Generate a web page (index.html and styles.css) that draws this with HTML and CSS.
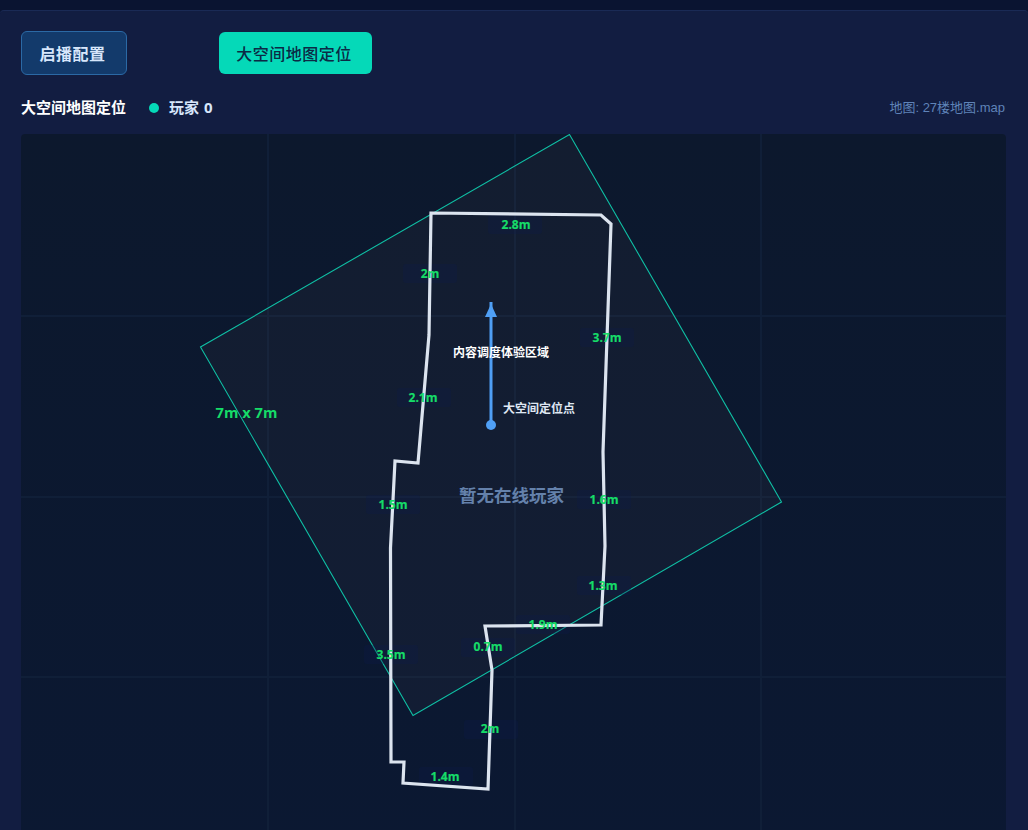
FILE: index.html
```html
<!DOCTYPE html>
<html lang="zh-CN">
<head>
<meta charset="utf-8">
<title>大空间地图定位</title>
<link rel="stylesheet" href="styles.css">
</head>
<body>
<main class="panel">
  <div class="toolbar">
    <button class="btn btn-config">启播配置</button>
    <button class="btn btn-active">大空间地图定位</button>
  </div>
  <div class="info">
    <div class="info-left">
      <span class="info-title">大空间地图定位</span>
      <span class="dot"></span>
      <span class="players">玩家 0</span>
    </div>
    <span class="map-name">地图: 27楼地图.map</span>
  </div>
  <div class="map">
    <svg class="map-svg" width="985" height="722" viewBox="21 134 985 722">
      <g class="grid">
        <path d="M268 134V856M515 134V856M761 134V856M21 316H1006M21 497H1006M21 677H1006"/>
      </g>
      <polygon class="zone" points="569.500,134.500 781.500,502 413,715.500 200.500,347"/>
      <text class="zone-label" x="246.500" y="418">7m x 7m</text>
      <g class="chips">
        <rect x="488" y="215" width="54" height="19"/>
        <rect x="403" y="264" width="54" height="19"/>
        <rect x="580" y="328" width="54" height="19"/>
        <rect x="397" y="388" width="54" height="19"/>
        <rect x="366" y="495" width="54" height="19"/>
        <rect x="577" y="490" width="54" height="19"/>
        <rect x="577" y="576" width="54" height="19"/>
        <rect x="516" y="615" width="54" height="19"/>
        <rect x="461" y="638" width="54" height="19"/>
        <rect x="364" y="645" width="54" height="19"/>
        <rect x="464" y="720" width="54" height="19"/>
        <rect x="419" y="767" width="54" height="19"/>
      </g>
      <polygon class="room" points="431,213 601,215 611,224 603,452 605,546 601,625 485,626 492,670 488,789 403,783 404,762 391,762 390.500,548 395,461 418,463 429,335"/>
      <g class="dims">
        <text x="516" y="229">2.8m</text>
        <text x="430" y="278">2m</text>
        <text x="607" y="342">3.7m</text>
        <text x="423" y="402">2.1m</text>
        <text x="393" y="509">1.5m</text>
        <text x="604" y="504">1.6m</text>
        <text x="603" y="590">1.3m</text>
        <text x="543" y="629">1.9m</text>
        <text x="488" y="651">0.7m</text>
        <text x="391" y="659">3.5m</text>
        <text x="490" y="733">2m</text>
        <text x="445" y="781">1.4m</text>
      </g>
      <path class="arrow-line" d="M491 425V302"/>
      <polygon class="arrow-head" points="491,304 497,317 485,317"/>
      <circle class="arrow-dot" cx="491" cy="425" r="5"/>
      <text class="area-label" x="501" y="357">内容调度体验区域</text>
      <text class="point-label" x="503" y="413">大空间定位点</text>
      <text class="empty" x="511.500" y="502">暂无在线玩家</text>
    </svg>
  </div>
</main>
</body>
</html>
```

FILE: styles.css
```css
* { box-sizing: border-box; }
html, body { height: 100%; }
body {
  margin: 0;
  height: 830px;
  overflow: hidden;
  background: #0a1431;
  font-family: "Open Sans", "Noto Sans CJK SC", sans-serif;
}
.panel {
  margin-top: 10px;
  height: 820px;
  padding: 20px 22px 0 21px;
  background: #121d41;
  border-top: 1px solid #1a2a55;
  border-radius: 4px 4px 0 0;
  overflow: hidden;
}
.toolbar {
  display: flex;
  align-items: center;
  gap: 92px;
  height: 44px;
}
.btn {
  font-family: inherit;
  font-size: 16px;
  letter-spacing: 0.5px;
  border-radius: 6px;
  padding: 0 3px 0 0;
}
.btn-config {
  width: 106px;
  height: 44px;
  font-weight: 700;
  color: #d7e6fb;
  background: #133a6b;
  border: 1px solid #2b69a5;
}
.btn-active {
  width: 153px;
  height: 42px;
  font-weight: 500;
  color: #0b2a45;
  background: #05d9b8;
  border: 0;
}
.info {
  display: flex;
  align-items: center;
  justify-content: space-between;
  height: 24px;
  margin-top: 19px;
  margin-bottom: 16px;
}
.info-left { display: flex; align-items: center; }
.info-title { font-size: 15px; font-weight: 700; color: #fff; }
.dot {
  width: 10px;
  height: 10px;
  margin: 3px 10px 0 23px;
  border-radius: 50%;
  background: #05d9b8;
}
.players { font-size: 15px; font-weight: 700; color: #d7e6fb; word-spacing: 1px; }
.map-name {
  font-family: "Liberation Sans", "Noto Sans CJK SC", sans-serif;
  font-size: 13px;
  color: #5f83b8;
  margin-right: 1px;
}
.map {
  height: 722px;
  border-radius: 4px;
  overflow: hidden;
  background: linear-gradient(180deg, #0c182d 0%, #0b1832 100%);
}
.map-svg { display: block; }
.grid path { fill: none; stroke: #101f38; stroke-width: 2; }
.zone { fill: rgba(255, 180, 160, 0.03); stroke: #0fbfa4; stroke-width: 1.1; }
.room { fill: none; stroke: #dce4ef; stroke-width: 3.2; }
.chips rect { fill: rgba(13, 27, 72, 0.3); rx: 3px; }
.dims text {
  font-size: 12px;
  font-weight: 700;
  fill: #16dc68;
  stroke: #16dc68;
  stroke-width: 0.2;
  text-anchor: middle;
}
.zone-label {
  font-size: 14.7px;
  font-weight: 700;
  fill: #16dc68;
  text-anchor: middle;
}
.arrow-line { stroke: #4f9ff5; stroke-width: 3; fill: none; }
.arrow-head, .arrow-dot { fill: #4f9ff5; }
.area-label { font-size: 12px; font-weight: 700; fill: #fff; text-anchor: middle; }
.point-label { font-size: 12px; font-weight: 700; fill: #dfe7f2; }
.empty { font-size: 17.5px; font-weight: 700; fill: #6481ab; text-anchor: middle; }
```
